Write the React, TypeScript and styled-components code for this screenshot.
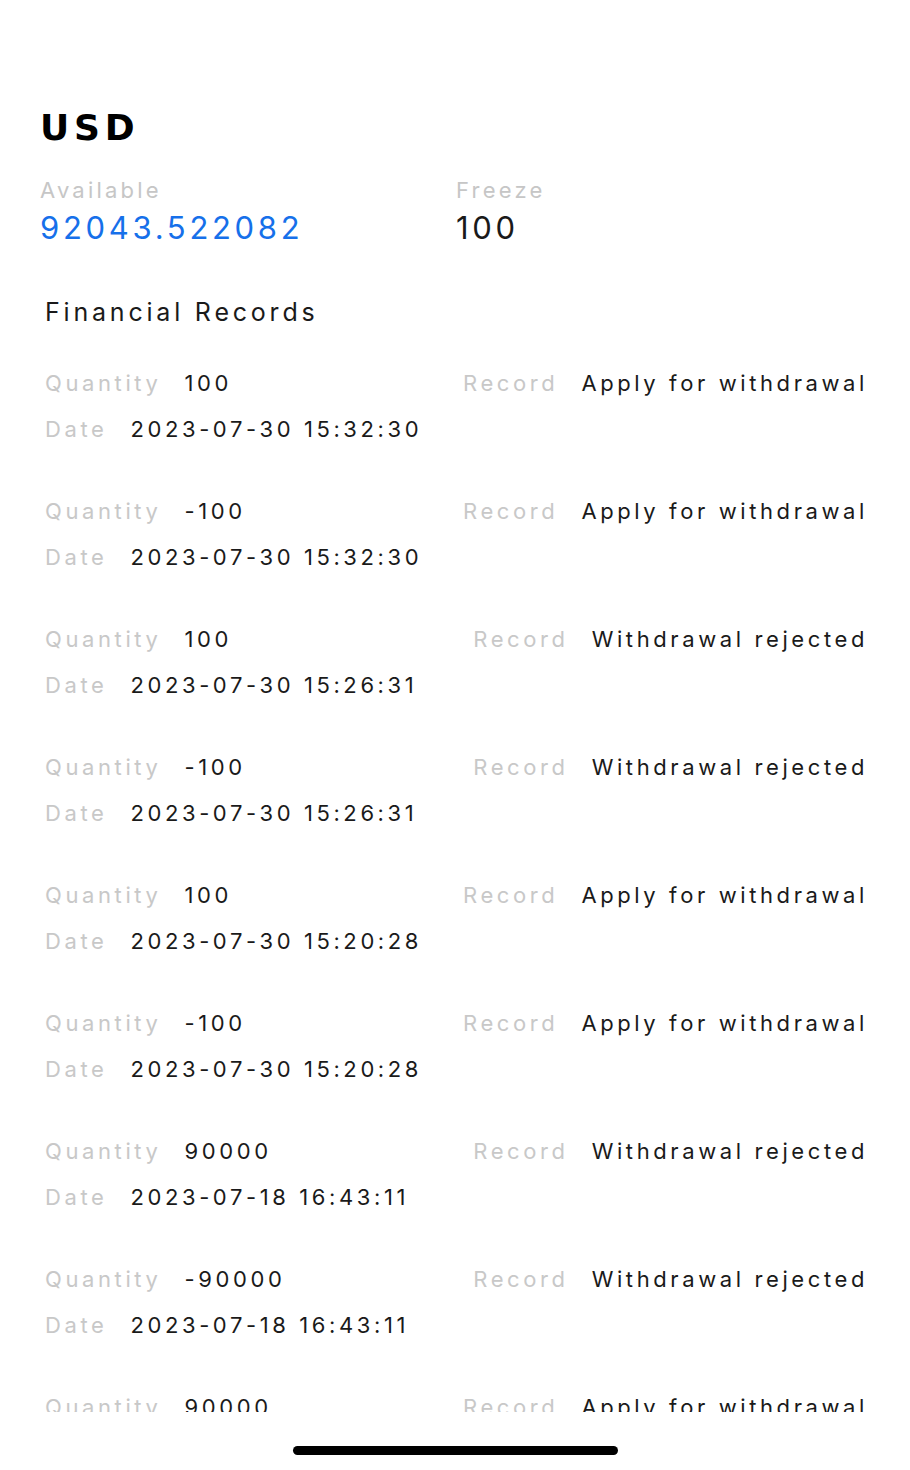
import styled, { createGlobalStyle } from 'styled-components';

type RecordItem = {
  quantity: string;
  record: string;
  date: string;
}

const records: RecordItem[] = [
  { quantity: '100', record: 'Apply for withdrawal', date: '2023-07-30 15:32:30' },
  { quantity: '-100', record: 'Apply for withdrawal', date: '2023-07-30 15:32:30' },
  { quantity: '100', record: 'Withdrawal rejected', date: '2023-07-30 15:26:31' },
  { quantity: '-100', record: 'Withdrawal rejected', date: '2023-07-30 15:26:31' },
  { quantity: '100', record: 'Apply for withdrawal', date: '2023-07-30 15:20:28' },
  { quantity: '-100', record: 'Apply for withdrawal', date: '2023-07-30 15:20:28' },
  { quantity: '90000', record: 'Withdrawal rejected', date: '2023-07-18 16:43:11' },
  { quantity: '-90000', record: 'Withdrawal rejected', date: '2023-07-18 16:43:11' },
  { quantity: '90000', record: 'Apply for withdrawal', date: '2023-07-18 16:43:11' },
];

const App = () => {
  return (
    <>
      <GlobalStyle />
      <Page>
        <Currency>USD</Currency>
        <Balances>
          <Balance>
            <BalanceLabel>Available</BalanceLabel>
            <BalanceValue highlight>92043.522082</BalanceValue>
          </Balance>
          <Balance>
            <BalanceLabel>Freeze</BalanceLabel>
            <BalanceValue>100</BalanceValue>
          </Balance>
        </Balances>

        <SectionTitle>Financial Records</SectionTitle>
        <RecordList>
          {records.map((item, i) => (
            <RecordCard key={i}>
              <Row>
                <Field>
                  <Label>Quantity</Label>
                  <Value>{item.quantity}</Value>
                </Field>
                <Field>
                  <Label>Record</Label>
                  <Value>{item.record}</Value>
                </Field>
              </Row>
              <Row>
                <Field>
                  <Label>Date</Label>
                  <Value>{item.date}</Value>
                </Field>
              </Row>
            </RecordCard>
          ))}
        </RecordList>
        <HomeBar />
      </Page>
    </>
  )
}

const GlobalStyle = createGlobalStyle`
  html, body {
    margin: 0;
    padding: 0;
    background: #fff;
  }
  body {
    font-family: Inter, "Noto Sans", "Liberation Sans", sans-serif;
    color: #1a1a1a;
  }
`;

const Page = styled.div`
  width: 910px;
  height: 1470px;
  box-sizing: border-box;
  padding-top: 103px;
  display: flex;
  flex-direction: column;
  overflow: hidden;
`;

const Currency = styled.h1`
  margin: 0 0 0 40px;
  height: 50px;
  line-height: 50px;
  font-family: "DejaVu Sans", Inter, sans-serif;
  font-size: 36px;
  font-weight: 700;
  letter-spacing: 4.8px;
  color: #000;
`;

const Balances = styled.div`
  display: grid;
  grid-template-columns: 416px 1fr;
  margin: 22px 0 0 40px;
`;

const Balance = styled.div`
  display: flex;
  flex-direction: column;
  gap: 3px;
`;

const BalanceLabel = styled.span`
  height: 30px;
  line-height: 30px;
  font-size: 22px;
  letter-spacing: 3.2px;
  color: #c6c6c6;
`;

type HighlightType = {
  highlight?: boolean;
}

const BalanceValue = styled.span<HighlightType>`
  height: 40px;
  line-height: 40px;
  font-size: 31px;
  letter-spacing: 3.7px;
  color: ${({ highlight }) => highlight ? '#1670ea' : '#1a1a1a'};
`;

const SectionTitle = styled.h2`
  margin: 47px 0 0 45px;
  height: 34px;
  line-height: 34px;
  font-size: 25px;
  font-weight: 400;
  letter-spacing: 3.8px;
  color: #1a1a1a;
`;

const RecordList = styled.div`
  margin-top: 39px;
  height: 1044px;
  overflow: hidden;
  padding: 0 42px 0 45px;
  display: flex;
  flex-direction: column;
  gap: 52px;
`;

const RecordCard = styled.div`
  display: flex;
  flex-direction: column;
  gap: 16px;
  flex-shrink: 0;
`;

const Row = styled.div`
  display: flex;
  justify-content: space-between;
  align-items: center;
  height: 30px;
`;

const Field = styled.div`
  display: flex;
  align-items: center;
  gap: 23px;
  font-size: 22px;
  line-height: 30px;
  letter-spacing: 3.6px;
`;

const Label = styled.span`
  color: #c8c8c8;
`;

const Value = styled.span`
  color: #1a1a1a;
`;

const HomeBar = styled.div`
  align-self: center;
  margin-top: 34px;
  width: 325px;
  height: 9px;
  border-radius: 5px;
  background: #000;
`;

export default App;
